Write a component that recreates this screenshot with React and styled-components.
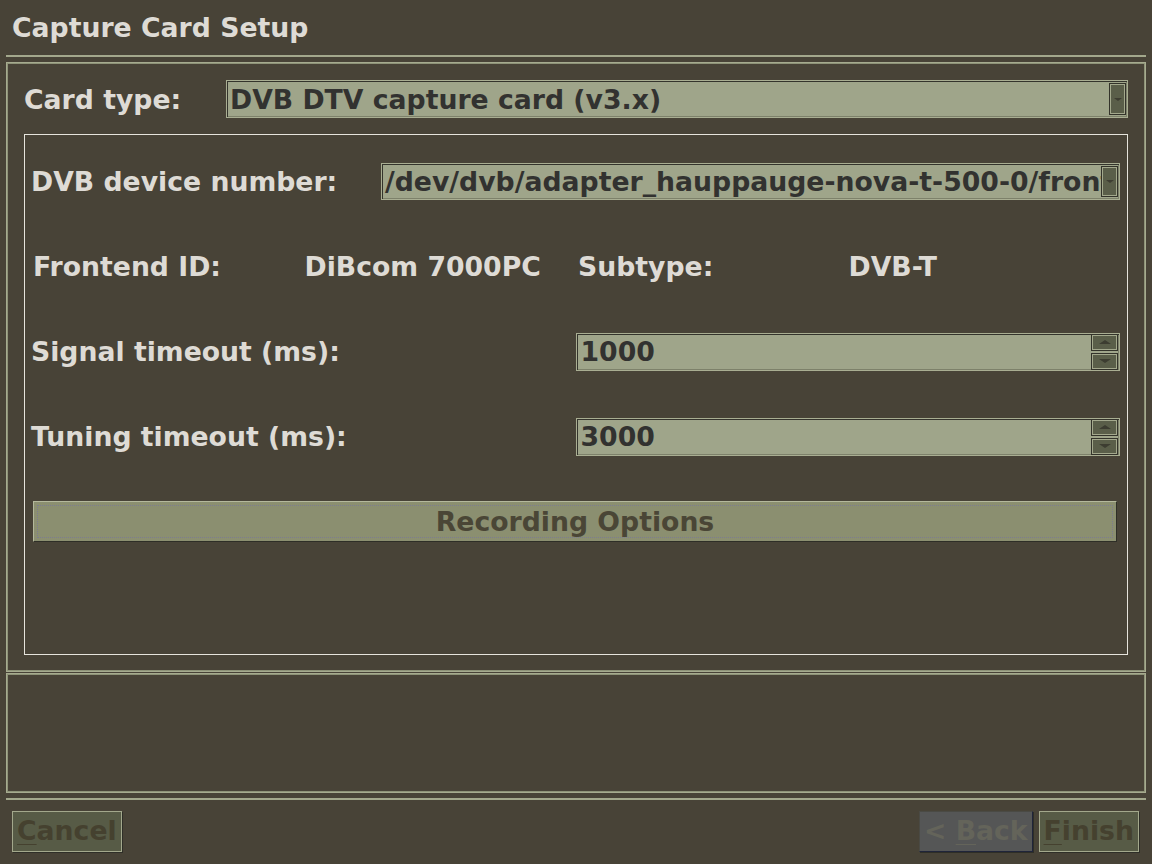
import React from "react";
import styled, { createGlobalStyle } from "styled-components";

const GlobalStyle = createGlobalStyle`
  html, body { margin: 0; padding: 0; background: #484337; }
  body {
    font-family: "DejaVu Sans", "Verdana", sans-serif;
    font-weight: bold;
    font-size: 26.7px;
  }
  * { box-sizing: border-box; }
`;

const Screen = styled.div`
  width: 1152px;
  height: 864px;
  display: flex;
  flex-direction: column;
  background: #484337;
  overflow: hidden;
`;

const TitleBar = styled.h1`
  margin: 0;
  height: 55px;
  padding: 0 0 0 12px;
  display: flex;
  align-items: center;
  font-size: 26.7px;
  font-weight: bold;
  color: #dedbd5;
`;

const Rule = styled.div`
  height: 2px;
  margin: ${(p) => p.$top || 0}px 6px 0;
  background: #a3a88c;
  flex: none;
`;

const Frame = styled.div`
  margin: ${(p) => p.$top || 0}px 6px 0;
  height: ${(p) => p.$h}px;
  flex: none;
  border: 1px solid #a6ab8f;
  box-shadow: inset 0 0 0 1px #8e9378;
  padding: ${(p) => (p.$pad ? "17px 17px 16px" : "0")};
  display: flex;
  flex-direction: column;
  gap: 16px;
`;

const CardRow = styled.div`
  display: flex;
  align-items: center;
  height: 38px;
  flex: none;
`;

const Label = styled.span`
  color: #dedbd5;
  white-space: nowrap;
  padding-left: ${(p) => p.$pl || 0}px;
`;

const CardLabel = styled(Label)`
  width: 202px;
  flex: none;
`;

const Field = styled.div`
  flex: 1;
  min-width: 0;
  height: ${(p) => p.$h || 38}px;
  display: flex;
  align-items: stretch;
  background: #9fa58a;
  border: 1px solid #a9ae92;
  box-shadow: inset 1px 1px 0 #34342c, inset -1px -1px 0 #7d816a;
  padding: ${(p) => p.$pad || "2px 1px 2px 1px"};
`;

const FieldText = styled.span`
  flex: 1;
  min-width: 0;
  overflow: hidden;
  white-space: nowrap;
  color: #323230;
  display: flex;
  align-items: center;
  padding-left: 2px;
`;

const ArrowButton = styled.span`
  flex: none;
  width: ${(p) => p.$w}px;
  height: ${(p) => (p.$h ? `${p.$h}px` : "auto")};
  background: #5a5e49;
  border: 1px solid #33332a;
  box-shadow: inset 0 0 0 1px #a3a88c;
  display: flex;
  align-items: center;
  justify-content: center;
`;

const Tri = styled.span`
  width: 0;
  height: 0;
  border-left: ${(p) => p.$s}px solid transparent;
  border-right: ${(p) => p.$s}px solid transparent;
  ${(p) => (p.$up ? "border-bottom" : "border-top")}: ${(p) => Math.round(p.$s * 0.7)}px solid #3d3d31;
`;

const SpinStack = styled.div`
  flex: none;
  display: flex;
  flex-direction: column;
  justify-content: space-between;
`;

const Group = styled.div`
  flex: 1;
  border: 1px solid #e6e4dc;
  padding-top: 4px;
  display: grid;
  grid-auto-rows: 85px;
  align-content: start;
`;

const DeviceRow = styled.div`
  display: grid;
  grid-template-columns: 350px 1fr;
  align-items: center;
  padding: 0 7px 0 6px;
`;

const InfoRow = styled.div`
  display: grid;
  grid-template-columns: repeat(4, 1fr);
  align-items: center;
  padding: 0 8px;
`;

const PairRow = styled.div`
  display: grid;
  grid-template-columns: 1fr 1fr;
  align-items: center;
  padding: 0 7px 0 6px;
`;

const ButtonRow = styled.div`
  display: flex;
  align-items: center;
  padding: 0 10px 0 8px;
`;

const WideButton = styled.button`
  flex: 1;
  height: 41px;
  font: inherit;
  color: #4a4636;
  background: #8b8f70;
  border: 1px solid;
  border-color: #b4b89c #2e2e27 #2e2e27 #b4b89c;
  outline: 1px dotted #7c7c90;
  outline-offset: -5px;
  padding: 0;
`;

const ButtonBar = styled.div`
  display: flex;
  justify-content: space-between;
  align-items: flex-start;
  padding: 11px 13px 0 12px;
`;

const RightButtons = styled.div`
  display: flex;
  gap: 6px;
`;

const NavButton = styled.button`
  height: 41px;
  padding: 0 4px;
  font: inherit;
  line-height: 1;
  background: ${(p) => (p.$gray ? "#555656" : "#575b46")};
  color: ${(p) => (p.$gray ? "#64645a" : "#45412f")};
  border: 1px solid;
  border-color: ${(p) =>
    p.$gray ? "#4a4a44 #20253a #20253a #4a4a44" : "#a3a88c"};
  box-shadow: 1px 1px 0 #2e2e27;
  cursor: default;
`;

const Mn = styled.span`
  text-decoration: underline;
  text-decoration-thickness: 1px;
  text-underline-offset: 4px;
`;

function Spin({ value }) {
  return (
    <Field $h={38} $pad="0 1px 0 2px">
      <FieldText>{value}</FieldText>
      <SpinStack>
        <ArrowButton $w={27} $h={17}>
          <Tri $s={6} $up />
        </ArrowButton>
        <ArrowButton $w={27} $h={17}>
          <Tri $s={6} />
        </ArrowButton>
      </SpinStack>
    </Field>
  );
}

function Combo({ value, h }) {
  return (
    <Field $h={h}>
      <FieldText>{value}</FieldText>
      <ArrowButton $w={17}>
        <Tri $s={4} />
      </ArrowButton>
    </Field>
  );
}

export default function App() {
  return (
    <Screen>
      <GlobalStyle />
      <TitleBar>Capture Card Setup</TitleBar>
      <Rule />
      <Frame $top={5} $h={610} $pad>
        <CardRow>
          <CardLabel>Card type:</CardLabel>
          <Combo value="DVB DTV capture card (v3.x)" h={38} />
        </CardRow>
        <Group>
          <DeviceRow>
            <Label>DVB device number:</Label>
            <Combo value="/dev/dvb/adapter_hauppauge-nova-t-500-0/frontend0" h={37} />
          </DeviceRow>
          <InfoRow>
            <Label>Frontend ID:</Label>
            <Label>DiBcom 7000PC</Label>
            <Label $pl={2}>Subtype:</Label>
            <Label $pl={1}>DVB-T</Label>
          </InfoRow>
          <PairRow>
            <Label>Signal timeout (ms):</Label>
            <Spin value="1000" />
          </PairRow>
          <PairRow>
            <Label>Tuning timeout (ms):</Label>
            <Spin value="3000" />
          </PairRow>
          <ButtonRow>
            <WideButton>Recording Options</WideButton>
          </ButtonRow>
        </Group>
      </Frame>
      <Frame $top={1} $h={120} />
      <Rule $top={5} />
      <ButtonBar>
        <NavButton>
          <Mn>C</Mn>ancel
        </NavButton>
        <RightButtons>
          <NavButton $gray>
            &lt; <Mn>B</Mn>ack
          </NavButton>
          <NavButton>
            <Mn>F</Mn>inish
          </NavButton>
        </RightButtons>
      </ButtonBar>
    </Screen>
  );
}
